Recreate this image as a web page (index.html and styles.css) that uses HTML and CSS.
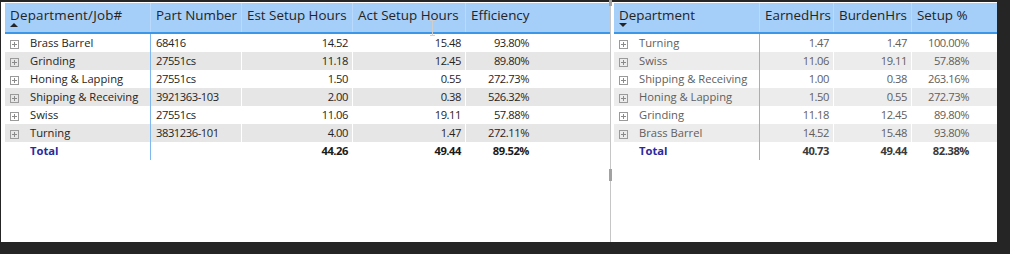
FILE: index.html
```html
<!DOCTYPE html>
<html>
<head>
<meta charset="utf-8">
<link rel="stylesheet" href="styles.css">
</head>
<body>
<div class="frame">
  <div class="canvas">
    <div class="pane pane-left">
      <div class="matrix m-left">
        <div class="row head">
          <div class="cell h c1">Department/Job#<span class="sort up"></span></div>
          <div class="cell h c2">Part Number</div>
          <div class="cell h c3">Est Setup Hours</div>
          <div class="cell h c4">Act Setup Hours</div>
          <div class="cell h c5">Efficiency</div>
        </div>
        <div class="row">
          <div class="cell c1 dept"><span class="exp"></span>Brass Barrel</div>
          <div class="cell c2 txt">68416</div>
          <div class="cell c3 num">14.52</div>
          <div class="cell c4 num">15.48</div>
          <div class="cell c5 num">93.80%</div>
        </div>
        <div class="row alt">
          <div class="cell c1 dept"><span class="exp"></span>Grinding</div>
          <div class="cell c2 txt">27551cs</div>
          <div class="cell c3 num">11.18</div>
          <div class="cell c4 num">12.45</div>
          <div class="cell c5 num">89.80%</div>
        </div>
        <div class="row">
          <div class="cell c1 dept"><span class="exp"></span>Honing &amp; Lapping</div>
          <div class="cell c2 txt">27551cs</div>
          <div class="cell c3 num">1.50</div>
          <div class="cell c4 num">0.55</div>
          <div class="cell c5 num">272.73%</div>
        </div>
        <div class="row alt">
          <div class="cell c1 dept"><span class="exp"></span>Shipping &amp; Receiving</div>
          <div class="cell c2 txt">3921363-103</div>
          <div class="cell c3 num">2.00</div>
          <div class="cell c4 num">0.38</div>
          <div class="cell c5 num">526.32%</div>
        </div>
        <div class="row">
          <div class="cell c1 dept"><span class="exp"></span>Swiss</div>
          <div class="cell c2 txt">27551cs</div>
          <div class="cell c3 num">11.06</div>
          <div class="cell c4 num">19.11</div>
          <div class="cell c5 num">57.88%</div>
        </div>
        <div class="row alt">
          <div class="cell c1 dept"><span class="exp"></span>Turning</div>
          <div class="cell c2 txt">3831236-101</div>
          <div class="cell c3 num">4.00</div>
          <div class="cell c4 num">1.47</div>
          <div class="cell c5 num">272.11%</div>
        </div>
        <div class="row total">
          <div class="cell c1 tlabel">Total</div>
          <div class="cell c2 txt"></div>
          <div class="cell c3 num">44.26</div>
          <div class="cell c4 num">49.44</div>
          <div class="cell c5 num">89.52%</div>
        </div>
      </div>
    </div>
    <div class="splitter"><span class="grip grip-top"></span><span class="grip grip-mid"></span></div>
    <div class="pane pane-right">
      <div class="matrix m-right">
        <div class="row head">
          <div class="cell h r1">Department<span class="sort down"></span></div>
          <div class="cell h r2">EarnedHrs</div>
          <div class="cell h r3">BurdenHrs</div>
          <div class="cell h r4">Setup %</div>
        </div>
        <div class="row">
          <div class="cell r1 dept"><span class="exp"></span>Turning</div>
          <div class="cell r2 num">1.47</div>
          <div class="cell r3 num">1.47</div>
          <div class="cell r4 num">100.00%</div>
        </div>
        <div class="row alt">
          <div class="cell r1 dept"><span class="exp"></span>Swiss</div>
          <div class="cell r2 num">11.06</div>
          <div class="cell r3 num">19.11</div>
          <div class="cell r4 num">57.88%</div>
        </div>
        <div class="row">
          <div class="cell r1 dept"><span class="exp"></span>Shipping &amp; Receiving</div>
          <div class="cell r2 num">1.00</div>
          <div class="cell r3 num">0.38</div>
          <div class="cell r4 num">263.16%</div>
        </div>
        <div class="row alt">
          <div class="cell r1 dept"><span class="exp"></span>Honing &amp; Lapping</div>
          <div class="cell r2 num">1.50</div>
          <div class="cell r3 num">0.55</div>
          <div class="cell r4 num">272.73%</div>
        </div>
        <div class="row">
          <div class="cell r1 dept"><span class="exp"></span>Grinding</div>
          <div class="cell r2 num">11.18</div>
          <div class="cell r3 num">12.45</div>
          <div class="cell r4 num">89.80%</div>
        </div>
        <div class="row alt">
          <div class="cell r1 dept"><span class="exp"></span>Brass Barrel</div>
          <div class="cell r2 num">14.52</div>
          <div class="cell r3 num">15.48</div>
          <div class="cell r4 num">93.80%</div>
        </div>
        <div class="row total">
          <div class="cell r1 tlabel">Total</div>
          <div class="cell r2 num">40.73</div>
          <div class="cell r3 num">49.44</div>
          <div class="cell r4 num">82.38%</div>
        </div>
      </div>
    </div>
  </div>
  <svg class="cursor" width="7" height="16" viewBox="0 0 7 16"><path d="M1 0.5h2.5M3.5 0.5h2.5M3.5 0.5v15M1 15.5h2.5M3.5 15.5h2.5" stroke="#cfcfcf" stroke-width="1" fill="none"/></svg>
</div>
</body>
</html>
```
FILE: styles.css
```css
html, body {
  margin: 0;
  padding: 0;
}
body {
  width: 1010px;
  height: 254px;
  overflow: hidden;
  background: #252525;
  font-family: "Open Sans", "Noto Sans", "Liberation Sans", sans-serif;
}
.frame {
  position: relative;
  box-sizing: border-box;
  width: 1010px;
  height: 254px;
  padding: 2px 13px 12px 1px;
}
.canvas {
  display: flex;
  height: 100%;
  background: #fff;
}
.pane {
  box-sizing: border-box;
  padding-top: 1px;
}
.pane-left {
  width: 609px;
  padding-left: 4px;
}
.pane-right {
  flex: 1;
  padding-left: 3px;
}
.splitter {
  position: relative;
  width: 1px;
  background: #c6c6c6;
}
.grip {
  position: absolute;
  left: -1px;
  width: 3px;
  background: #a2a2a2;
}
.grip-top { top: -2px; height: 6px; }
.grip-mid { top: 167px; height: 12px; }

.matrix {
  display: flex;
  flex-direction: column;
}
.row {
  display: flex;
  height: 18px;
}
.cell {
  box-sizing: border-box;
  height: 100%;
  border-right: 1px solid #fff;
  font-size: 11.2px;
  line-height: 18px;
  white-space: nowrap;
  overflow: hidden;
  color: #252423;
}
.m-right .cell { color: #605e5c; }
.row.head {
  height: 29px;
  background: #a5cff9;
  border-bottom: 2px solid #3d97e8;
}
.row.head .cell {
  position: relative;
  font-size: 13.4px;
  line-height: 18px;
  padding: 3px 0 0 5px;
  color: #252423;
  border-right: 1px solid #b9dafb;
}
.row.head .c1 { letter-spacing: 0.2px; }
.row.alt { background: #e6e6e6; }
.m-right .row.alt { background: #ececec; }

.c1 { width: 146px; }
.c2 { width: 91px; }
.c3 { width: 111px; }
.c4 { width: 113px; }
.c5 { width: 67px; border-right: 0 !important; }
.r1 { width: 146px; }
.r2 { width: 74px; }
.r3 { width: 78px; }
.r4 { width: 61px; border-right: 0 !important; }

.row:not(.head) .c1,
.row:not(.head) .r1 {
  border-right: 1px solid #7fb8ee;
}
.dept {
  display: flex;
  align-items: center;
  padding-left: 5px;
}
.exp {
  position: relative;
  box-sizing: border-box;
  flex: none;
  width: 9px;
  height: 9px;
  margin: 2px 11px 0 0;
  border: 1px solid #9a9a9a;
  background: #fff;
}
.row.alt .exp { background: transparent; }
.exp::before,
.exp::after {
  content: "";
  position: absolute;
  background: #8a8a8a;
}
.exp::before { left: 1px; top: 3px; width: 5px; height: 1px; }
.exp::after { left: 3px; top: 1px; width: 1px; height: 5px; }

.txt {
  padding-left: 5px;
  letter-spacing: -0.45px;
}
.num {
  text-align: right;
  padding-right: 4px;
  letter-spacing: -0.45px;
}
.total .cell {
  font-weight: 700;
  color: #1a1a1a;
}
.m-right .total .cell { color: #3a3a3a; }
.total .tlabel,
.m-right .total .tlabel {
  padding-left: 25px;
  color: #2a2aa0;
  letter-spacing: 0;
}
.sort {
  position: absolute;
  left: 5px;
  top: 20px;
  width: 0;
  height: 0;
  border-left: 4px solid transparent;
  border-right: 4px solid transparent;
}
.sort.up { border-bottom: 4px solid #252423; }
.sort.down { border-top: 4px solid #252423; }
.cursor {
  position: absolute;
  left: 429px;
  top: 20px;
}
```
